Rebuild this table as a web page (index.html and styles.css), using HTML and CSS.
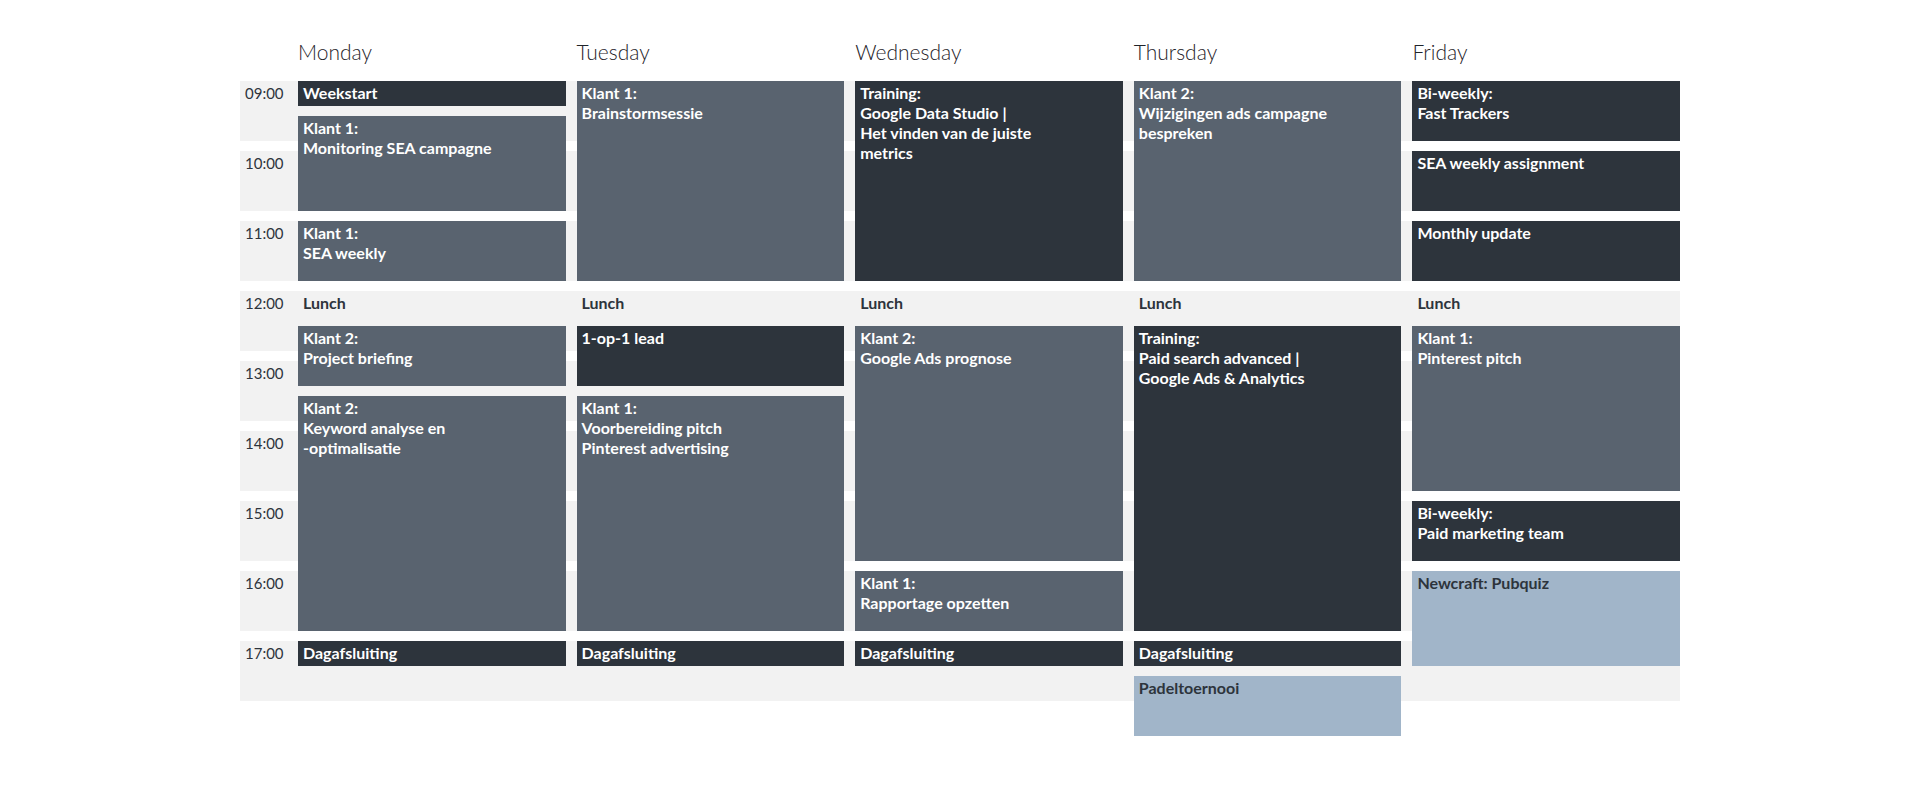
FILE: index.html
```html
<!DOCTYPE html>
<html lang="nl">
<head>
<meta charset="utf-8">
<title>Weekplanning</title>
<link rel="stylesheet" href="styles.css">
</head>
<body>
<div class="week">
  <div class="days">
    <div class="day-name">Monday</div>
    <div class="day-name">Tuesday</div>
    <div class="day-name">Wednesday</div>
    <div class="day-name">Thursday</div>
    <div class="day-name">Friday</div>
  </div>
  <div class="grid">
    <div class="stripe s1"></div>
    <div class="stripe s3"></div>
    <div class="stripe s5"></div>
    <div class="stripe s7"></div>
    <div class="stripe s9"></div>
    <div class="stripe s11"></div>
    <div class="stripe s13"></div>
    <div class="stripe s15"></div>
    <div class="stripe s17"></div>

    <div class="time s1">09:00</div>
    <div class="time s3">10:00</div>
    <div class="time s5">11:00</div>
    <div class="time s7">12:00</div>
    <div class="time s9">13:00</div>
    <div class="time s11">14:00</div>
    <div class="time s13">15:00</div>
    <div class="time s15">16:00</div>
    <div class="time s17">17:00</div>

    <!-- Monday -->
    <div class="ev mon s1 d1 dark">Weekstart</div>
    <div class="ev mon s2 d3 mid">Klant 1:<br>Monitoring SEA campagne</div>
    <div class="ev mon s5 d2 mid">Klant 1:<br>SEA weekly</div>
    <div class="ev mon s7 d1 lunch">Lunch</div>
    <div class="ev mon s8 d2 mid">Klant 2:<br>Project briefing</div>
    <div class="ev mon s10 d7 mid">Klant 2:<br>Keyword analyse en<br>-optimalisatie</div>
    <div class="ev mon s17 d1 dark">Dagafsluiting</div>

    <!-- Tuesday -->
    <div class="ev tue s1 d6 mid">Klant 1:<br>Brainstormsessie</div>
    <div class="ev tue s7 d1 lunch">Lunch</div>
    <div class="ev tue s8 d2 dark">1-op-1 lead</div>
    <div class="ev tue s10 d7 mid">Klant 1:<br>Voorbereiding pitch<br>Pinterest advertising</div>
    <div class="ev tue s17 d1 dark">Dagafsluiting</div>

    <!-- Wednesday -->
    <div class="ev wed s1 d6 dark">Training:<br>Google Data Studio |<br>Het vinden van de juiste<br>metrics</div>
    <div class="ev wed s7 d1 lunch">Lunch</div>
    <div class="ev wed s8 d7 mid">Klant 2:<br>Google Ads prognose</div>
    <div class="ev wed s15 d2 mid">Klant 1:<br>Rapportage opzetten</div>
    <div class="ev wed s17 d1 dark">Dagafsluiting</div>

    <!-- Thursday -->
    <div class="ev thu s1 d6 mid">Klant 2:<br>Wijzigingen ads campagne<br>bespreken</div>
    <div class="ev thu s7 d1 lunch">Lunch</div>
    <div class="ev thu s8 d9 dark">Training:<br>Paid search advanced |<br>Google Ads &amp; Analytics</div>
    <div class="ev thu s17 d1 dark">Dagafsluiting</div>
    <div class="ev thu s18 d2 light">Padeltoernooi</div>

    <!-- Friday -->
    <div class="ev fri s1 d2 dark">Bi-weekly:<br>Fast Trackers</div>
    <div class="ev fri s3 d2 dark">SEA weekly assignment</div>
    <div class="ev fri s5 d2 dark">Monthly update</div>
    <div class="ev fri s7 d1 lunch">Lunch</div>
    <div class="ev fri s8 d5 mid">Klant 1:<br>Pinterest pitch</div>
    <div class="ev fri s13 d2 dark">Bi-weekly:<br>Paid marketing team</div>
    <div class="ev fri s15 d3 light">Newcraft: Pubquiz</div>
  </div>
</div>
</body>
</html>
```
FILE: styles.css
```css
* { box-sizing: border-box; }

html, body {
  margin: 0;
  padding: 0;
  background: #ffffff;
}

body {
  font-family: Lato, "Noto Sans", "Liberation Sans", sans-serif;
  color: #2d343c;
}

.week {
  width: 1440px;
  margin: 0 auto;
  padding-top: 40px;
}

.days,
.grid {
  display: grid;
  grid-template-columns: 47px repeat(5, 1fr);
  column-gap: 11px;
}

.days {
  height: 41px;
}

.day-name {
  font-size: 21px;
  font-weight: 300;
  line-height: 24px;
  color: #1f242a;
}

.days .day-name:first-child {
  grid-column: 2;
}

.grid {
  grid-template-rows: repeat(19, 25px);
  row-gap: 10px;
}

.stripe {
  grid-column: 1 / -1;
  grid-row-end: span 2;
  background: #f2f2f2;
}

.time {
  grid-column: 1;
  grid-row-end: span 2;
  font-size: 15px;
  font-weight: 400;
  line-height: 20px;
  padding: 2px 0 0 5px;
  color: #2d343c;
}

.ev {
  font-size: 16px;
  font-weight: 700;
  line-height: 20px;
  padding: 2px 5px 0 5px;
  color: #ffffff;
  overflow: hidden;
}

.dark  { background: #2d343c; }
.mid   { background: #59636f; }
.light { background: #a1b5c9; color: #2d343c; }
.lunch { background: transparent; color: #2d343c; }

/* columns */
.mon { grid-column: 2; }
.tue { grid-column: 3; }
.wed { grid-column: 4; }
.thu { grid-column: 5; }
.fri { grid-column: 6; }

/* start rows (half-hour slots from 09:00) */
.s1  { grid-row-start: 1; }
.s2  { grid-row-start: 2; }
.s3  { grid-row-start: 3; }
.s5  { grid-row-start: 5; }
.s7  { grid-row-start: 7; }
.s8  { grid-row-start: 8; }
.s9  { grid-row-start: 9; }
.s10 { grid-row-start: 10; }
.s11 { grid-row-start: 11; }
.s13 { grid-row-start: 13; }
.s15 { grid-row-start: 15; }
.s17 { grid-row-start: 17; }
.s18 { grid-row-start: 18; }

/* durations in half hours */
.d1 { grid-row-end: span 1; }
.d2 { grid-row-end: span 2; }
.d3 { grid-row-end: span 3; }
.d5 { grid-row-end: span 5; }
.d6 { grid-row-end: span 6; }
.d7 { grid-row-end: span 7; }
.d9 { grid-row-end: span 9; }
```
